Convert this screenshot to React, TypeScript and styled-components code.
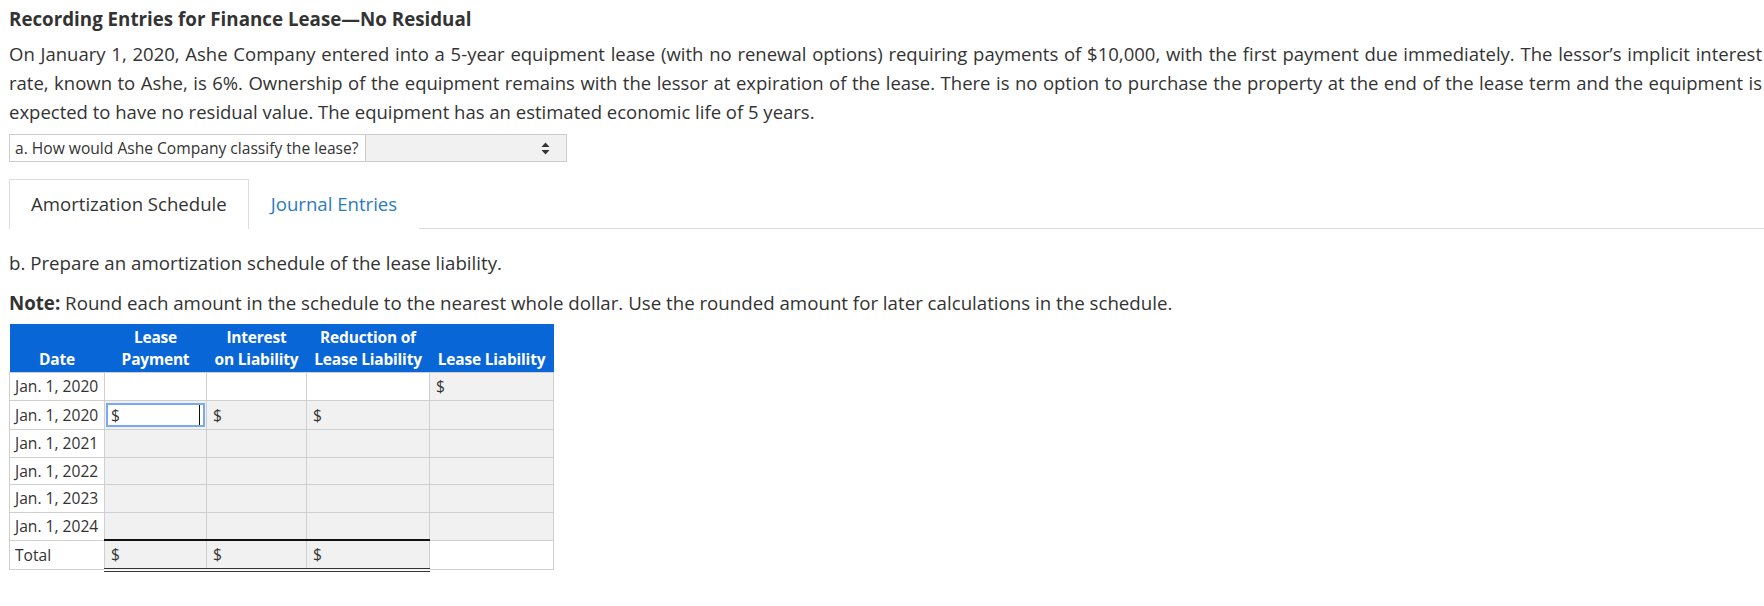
import React from 'react';
import styled, { createGlobalStyle } from 'styled-components';

const GlobalStyle = createGlobalStyle`
  body {
    margin: 0;
    background: #fff;
    color: #333;
    font-family: "Open Sans", "Liberation Sans", Arial, sans-serif;
  }
`

const Page = styled.div`
  padding: 0 0 0 9px;
`
const Title = styled.h1`
  margin: 7px 0 0;
  font-size: 18.75px;
  line-height: 24px;
  font-weight: 700;
  color: #333;
`
const Paragraph = styled.p<{ $top: number; $justify?: boolean }>`
  margin: ${p => p.$top}px 2px 0 0;
  font-size: ${p => (p.$justify ? '18.5px' : '18.7px')};
  line-height: 29px;
  text-align: ${p => (p.$justify ? 'justify' : 'left')};
`
const QuestionRow = styled.div`
  display: flex;
  margin-top: 8px;
  width: 558px;
  height: 28px;
  font-size: 15.6px;
`
const QuestionLabel = styled.div`
  display: flex;
  align-items: center;
  width: 357px;
  padding-left: 5px;
  box-sizing: border-box;
  border: 1px solid #ccc;
  background: #fff;
  white-space: nowrap;
`
const Select = styled.div`
  flex: 1;
  display: flex;
  align-items: center;
  justify-content: flex-end;
  padding-right: 16px;
  border: 1px solid #ccc;
  border-left: none;
  background: #f1f1f1;
`
const TabBar = styled.div`
  display: flex;
  margin-top: 17px;
  border-bottom: 1px solid #ddd;
`
const Tab = styled.div<{ $active?: boolean }>`
  padding: 0 21px;
  height: 48px;
  line-height: 48px;
  font-size: 18.6px;
  border: 1px solid ${p => (p.$active ? '#ddd' : 'transparent')};
  border-bottom: none;
  margin-bottom: -1px;
  padding-bottom: 1px;
  background: #fff;
  color: ${p => (p.$active ? '#333' : '#2b7bc0')};
`
const Strong = styled.strong`
  font-weight: 700;
`
const Table = styled.table`
  margin-top: 7px;
  border-collapse: collapse;
  table-layout: fixed;
  width: 544px;
  font-size: 15.6px;
`
const HeadCell = styled.th`
  background: #0966d6;
  color: #fff;
  font-size: 15.5px;
  font-weight: 700;
  line-height: 22px;
  padding: 2px 0;
  vertical-align: bottom;
  text-align: center;
  white-space: nowrap;
  letter-spacing: -0.2px;
`
const DateCell = styled.td`
  height: 26.5px;
  padding: 0 5px;
  border: 1px solid #cfcfcf;
  background: #fff;
  white-space: nowrap;
`
const Cell = styled.td<{ $grey?: boolean; $total?: boolean }>`
  height: 26.5px;
  padding: 0 6px;
  border: 1px solid #cfcfcf;
  background: ${p => (p.$grey ? '#f1f1f1' : '#fff')};
  ${p => p.$total && `
    border-top: 2px solid #111;
    border-bottom: 4px double #333;
  `}
`
const FocusCell = styled.td`
  height: 26.5px;
  padding: 1px 1px;
  border: 1px solid #cfcfcf;
  background: #f1f1f1;
`
const FocusInput = styled.div`
  position: relative;
  height: 24px;
  box-sizing: border-box;
  border: 2px solid #7aa8f2;
  background: #fff;
  padding-left: 3px;
  line-height: 20px;
`
const Caret = styled.span`
  position: absolute;
  right: 3px;
  top: 0;
  bottom: 0;
  width: 1px;
  background: #111;
`

const SortArrows = () => (
  <svg width="9" height="13" viewBox="0 0 9 13">
    <path d="M4.5 0.5 L8.5 5 L0.5 5 Z" fill="#333" />
    <path d="M4.5 12.5 L8.5 8 L0.5 8 Z" fill="#333" />
  </svg>
)

type Kind = 'blank' | 'dollar' | 'grey' | 'greyDollar' | 'focus'

const rows: { date: string; cells: Kind[] }[] = [
  { date: 'Jan. 1, 2020', cells: ['blank', 'blank', 'blank', 'greyDollar'] },
  { date: 'Jan. 1, 2020', cells: ['focus', 'greyDollar', 'greyDollar', 'grey'] },
  { date: 'Jan. 1, 2021', cells: ['grey', 'grey', 'grey', 'grey'] },
  { date: 'Jan. 1, 2022', cells: ['grey', 'grey', 'grey', 'grey'] },
  { date: 'Jan. 1, 2023', cells: ['grey', 'grey', 'grey', 'grey'] },
  { date: 'Jan. 1, 2024', cells: ['grey', 'grey', 'grey', 'grey'] },
]

const renderCell = (kind: Kind, i: number) => {
  if (kind === 'focus')
    return (
      <FocusCell key={i}>
        <FocusInput>$<Caret /></FocusInput>
      </FocusCell>
    )
  const grey = kind === 'grey' || kind === 'greyDollar'
  const dollar = kind === 'dollar' || kind === 'greyDollar'
  return <Cell key={i} $grey={grey}>{dollar ? '$' : ''}</Cell>
}

const App = () => {
  return (
    <Page>
      <GlobalStyle />
      <Title>Recording Entries for Finance Lease—No Residual</Title>
      <Paragraph $top={8} $justify>
        On January 1, 2020, Ashe Company entered into a 5-year equipment lease (with no renewal options) requiring
        payments of $10,000, with the first payment due immediately. The lessor’s implicit interest rate, known to
        Ashe, is 6%. Ownership of the equipment remains with the lessor at expiration of the lease. There is no option
        to purchase the property at the end of the lease term and the equipment is expected to have no residual value.
        The equipment has an estimated economic life of 5 years.
      </Paragraph>
      <QuestionRow>
        <QuestionLabel>a. How would Ashe Company classify the lease?</QuestionLabel>
        <Select>
          <SortArrows />
        </Select>
      </QuestionRow>
      <TabBar>
        <Tab $active>Amortization Schedule</Tab>
        <Tab>Journal Entries</Tab>
      </TabBar>
      <Paragraph $top={19}>b. Prepare an amortization schedule of the lease liability.</Paragraph>
      <Paragraph $top={11}>
        <Strong>Note:</Strong> Round each amount in the schedule to the nearest whole dollar. Use the rounded amount
        for later calculations in the schedule.
      </Paragraph>
      <Table>
        <colgroup>
          <col style={{ width: 95 }} />
          <col style={{ width: 102 }} />
          <col style={{ width: 100 }} />
          <col style={{ width: 123 }} />
          <col style={{ width: 124 }} />
        </colgroup>
        <thead>
          <tr>
            <HeadCell>Date</HeadCell>
            <HeadCell>Lease<br />Payment</HeadCell>
            <HeadCell>Interest<br />on Liability</HeadCell>
            <HeadCell>Reduction of<br />Lease Liability</HeadCell>
            <HeadCell>Lease Liability</HeadCell>
          </tr>
        </thead>
        <tbody>
          {rows.map((row, r) => (
            <tr key={r}>
              <DateCell>{row.date}</DateCell>
              {row.cells.map(renderCell)}
            </tr>
          ))}
          <tr>
            <DateCell>Total</DateCell>
            <Cell $grey $total>$</Cell>
            <Cell $grey $total>$</Cell>
            <Cell $grey $total>$</Cell>
            <Cell />
          </tr>
        </tbody>
      </Table>
    </Page>
  );
};

export default App;
